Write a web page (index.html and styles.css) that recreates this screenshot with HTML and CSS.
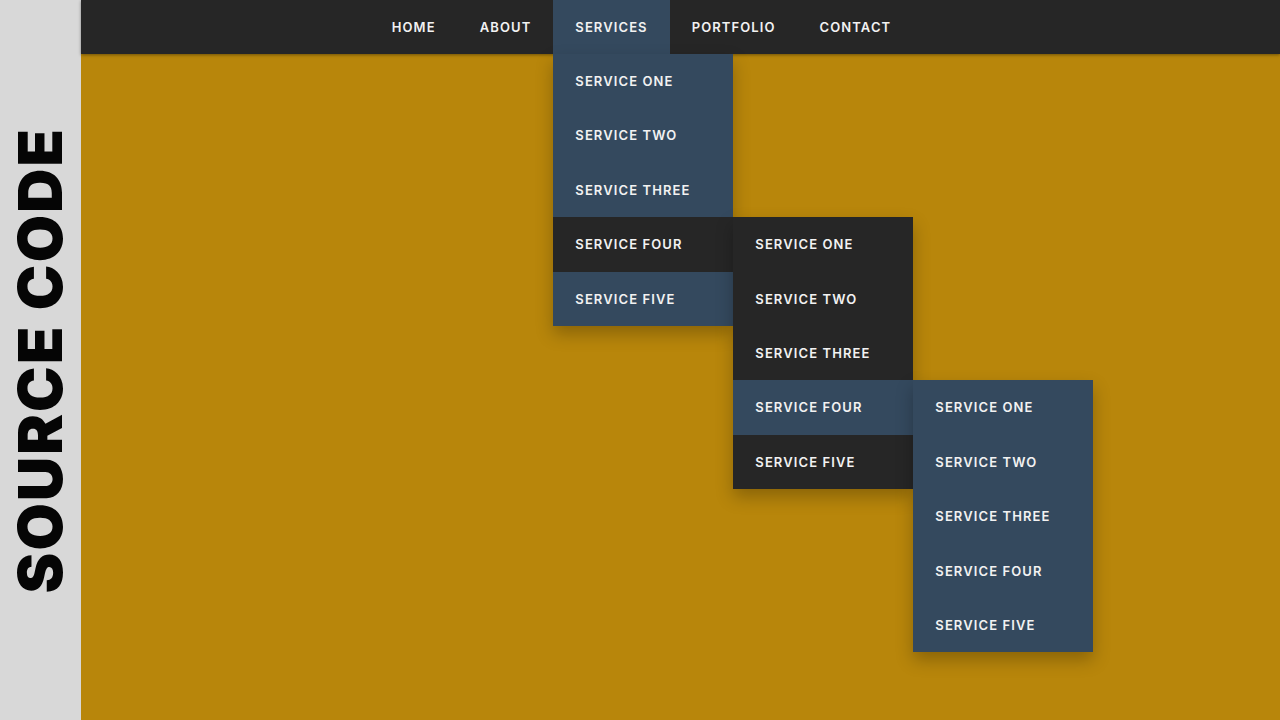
FILE: index.html
```html
<!DOCTYPE html>
<html lang="en">

<head>
    <meta charset="UTF-8">
    <meta name="viewport" content="width=device-width, initial-scale=1.0">
    <link rel="stylesheet" href="styles.css">
    <title>Multi Level Dropdown Menu</title>
</head>

<body>

    <aside class="side">
        <span class="side-title">SOURCE CODE</span>
    </aside>

    <main class="page">
        <nav class="nav">
            <ul class="menu">
                <li><a href="#">Home</a></li>
                <li><a href="#">About</a></li>
                <li class="active">
                    <a href="#">Services</a>
                    <ul class="dropdown blue">
                        <li><a href="#">Service One</a></li>
                        <li><a href="#">Service Two</a></li>
                        <li><a href="#">Service Three</a></li>
                        <li class="active">
                            <a href="#">Service Four</a>
                            <ul class="dropdown sub dark">
                                <li><a href="#">Service One</a></li>
                                <li><a href="#">Service Two</a></li>
                                <li><a href="#">Service Three</a></li>
                                <li class="active">
                                    <a href="#">Service Four</a>
                                    <ul class="dropdown sub blue">
                                        <li><a href="#">Service One</a></li>
                                        <li><a href="#">Service Two</a></li>
                                        <li><a href="#">Service Three</a></li>
                                        <li><a href="#">Service Four</a></li>
                                        <li><a href="#">Service Five</a></li>
                                    </ul>
                                </li>
                                <li><a href="#">Service Five</a></li>
                            </ul>
                        </li>
                        <li><a href="#">Service Five</a></li>
                    </ul>
                </li>
                <li><a href="#">Portfolio</a></li>
                <li><a href="#">Contact</a></li>
            </ul>
        </nav>
    </main>

</body>

</html>
```

FILE: styles.css
```css
* {
    box-sizing: border-box;
}

body {
    margin: 0;
    height: 720px;
    display: flex;
    font-family: 'Inter', 'Lato', sans-serif;
    overflow: hidden;
}

.side {
    width: 81px;
    flex-shrink: 0;
    background-color: #d8d8d8;
    display: flex;
    align-items: center;
    justify-content: center;
}

.side-title {
    writing-mode: vertical-rl;
    transform: rotate(180deg);
    font-size: 61px;
    font-weight: 900;
    color: #050505;
    letter-spacing: 2.2px;
    line-height: 1;
}

.page {
    flex: 1;
    background-color: #b8860b;
}

.nav {
    height: 54px;
    background-color: #262626;
    display: flex;
    justify-content: center;
    padding-right: 78px;
    box-shadow: 0 1px 3px rgba(0, 0, 0, 0.4);
}

ul {
    list-style: none;
    margin: 0;
    padding: 0;
}

.menu {
    display: flex;
}

.menu li {
    position: relative;
}

.menu a {
    display: block;
    color: #f2f2f2;
    text-decoration: none;
    text-transform: uppercase;
    font-size: 13px;
    font-weight: 600;
    letter-spacing: 1.1px;
    line-height: 54.4px;
    padding: 0 22px;
    white-space: nowrap;
}

.menu > li > a {
    line-height: 54px;
}

.menu > li.active > a {
    background-color: #34495e;
}

.dropdown {
    position: absolute;
    top: 100%;
    left: 0;
    width: 180px;
    box-shadow: 0 8px 16px rgba(0, 0, 0, 0.25);
    z-index: 1;
}

.dropdown.sub {
    top: 0;
    left: 100%;
}

.dropdown.blue {
    background-color: #34495e;
}

.dropdown.dark {
    background-color: #262626;
}

.dropdown.blue > li.active > a {
    background-color: #262626;
}

.dropdown.dark > li.active > a {
    background-color: #34495e;
}
```
